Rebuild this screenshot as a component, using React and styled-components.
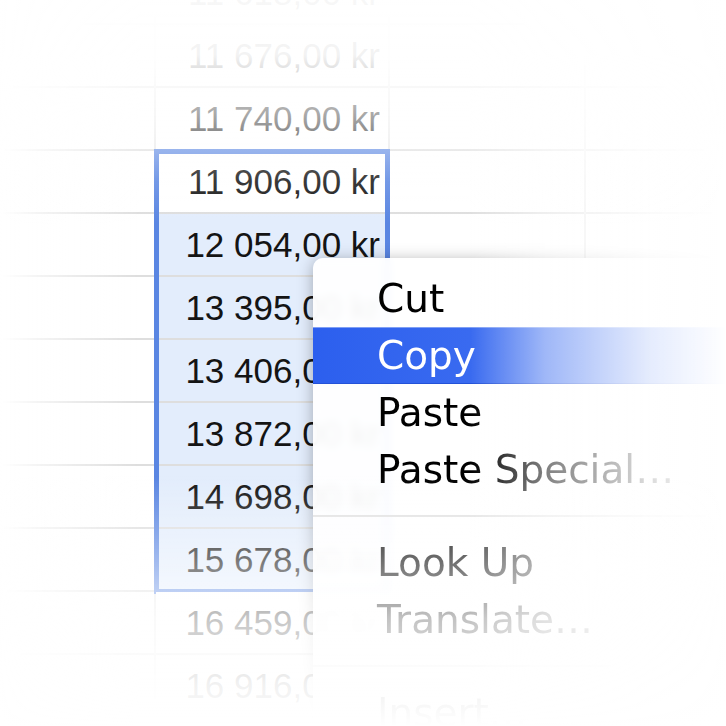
import React from 'react';
import styled, { createGlobalStyle } from 'styled-components';

const GlobalStyle = createGlobalStyle`
  html, body {
    margin: 0;
    padding: 0;
    background: #fff;
  }
`;

const ROW = 63;

const values = [
  '11 618,00 kr',
  '11 676,00 kr',
  '11 740,00 kr',
  '11 906,00 kr',
  '12 054,00 kr',
  '13 395,00 kr',
  '13 406,00 kr',
  '13 872,00 kr',
  '14 698,00 kr',
  '15 678,00 kr',
  '16 459,00 kr',
  '16 916,00 kr',
  '17 204,00 kr',
];

const SEL_FROM = 3;
const SEL_TO = 9;

const menuItems = [
  { label: 'Cut' },
  { label: 'Copy', active: true },
  { label: 'Paste' },
  { label: 'Paste Special…' },
  { separator: true },
  { label: 'Look Up' },
  { label: 'Translate…' },
  { separator: true },
  { label: 'Insert…' },
];

const Page = styled.div`
  position: relative;
  width: 726px;
  height: 726px;
  overflow: hidden;
  background: #fff;
`;

const Sheet = styled.div`
  position: relative;
  z-index: 0;
  display: flex;
  margin-top: -38px;
`;

const Column = styled.div`
  flex: ${props => (props.$width ? 'none' : '1')};
  width: ${props => (props.$width ? `${props.$width}px` : 'auto')};
  box-sizing: border-box;
  border-right: ${props => (props.$line ? '2px solid #e8e8e8' : 'none')};
  display: flex;
  flex-direction: column;
`;

const Cell = styled.div`
  flex: none;
  height: ${ROW}px;
  box-sizing: border-box;
  border-bottom: 2px solid #dedede;
  padding-right: 8px;
  font-family: 'Liberation Sans', Arial, sans-serif;
  font-size: 35px;
  line-height: 61px;
  text-align: right;
  white-space: nowrap;
  overflow: hidden;
  color: #141414;
  background: ${props =>
    props.$tone === 'selected' ? '#e3edfc' : '#fff'};
`;

const Selection = styled.div`
  display: flex;
  flex-direction: column;
  outline: 5px solid #5a86e2;
  outline-offset: -3px;
`;

const Menu = styled.div`
  position: absolute;
  left: 313px;
  top: 258px;
  z-index: 2;
  width: 480px;
  height: 520px;
  padding-top: 12px;
  box-sizing: border-box;
  border-top-left-radius: 10px;
  background: rgba(255, 255, 255, 0.95);
  backdrop-filter: blur(4px);
  box-shadow: 0 2px 16px rgba(0, 0, 0, 0.3);
`;

const MenuItem = styled.div`
  height: 57px;
  padding-left: 64px;
  font-family: 'DejaVu Sans', 'Lucida Grande', sans-serif;
  font-size: 39px;
  line-height: 57px;
  white-space: nowrap;
  color: ${props => (props.$active ? '#fff' : '#000')};
  background: ${props =>
    props.$active
      ? 'linear-gradient(to right, #2c5fee 0%, #3a6bf0 35%, #5482f3 100%)'
      : 'transparent'};
  box-shadow: ${props =>
    props.$active ? 'inset 0 1px 0 #7f9ff4, inset 0 -1px 0 #2352d8' : 'none'};
`;

const Separator = styled.div`
  height: 36px;
  display: flex;
  align-items: center;

  &::before {
    content: '';
    flex: 1;
    height: 2px;
    background: #e2e2e2;
  }
`;

const Fade = styled.div`
  position: absolute;
  inset: 0;
  z-index: 5;
  pointer-events: none;
  background:
    linear-gradient(
      to bottom,
      rgba(255, 255, 255, 0.97) 0px,
      rgba(255, 255, 255, 0.95) 55px,
      rgba(255, 255, 255, 0.62) 117px,
      rgba(255, 255, 255, 0.16) 181px,
      rgba(255, 255, 255, 0) 225px
    ),
    linear-gradient(
      to top,
      #fff 0px,
      rgba(255, 255, 255, 0.94) 43px,
      rgba(255, 255, 255, 0.76) 108px,
      rgba(255, 255, 255, 0.4) 171px,
      rgba(255, 255, 255, 0) 250px
    ),
    linear-gradient(
      to right,
      rgba(255, 255, 255, 0) 470px,
      rgba(255, 255, 255, 0.5) 545px,
      rgba(255, 255, 255, 0.86) 650px,
      #fff 726px
    ),
    linear-gradient(
      to right,
      #fff 0px,
      rgba(255, 255, 255, 0.65) 40px,
      rgba(255, 255, 255, 0) 140px
    );
`;

const EmptyColumn = ({ width, line }) => (
  <Column $width={width} $line={line}>
    {values.map(v => (
      <Cell key={v} />
    ))}
  </Column>
);

const AmountColumn = () => {
  const before = values.slice(0, SEL_FROM);
  const selected = values.slice(SEL_FROM, SEL_TO + 1);
  const after = values.slice(SEL_TO + 1);

  return (
    <Column $width={234} $line>
      {before.map(v => (
        <Cell key={v}>{v}</Cell>
      ))}
      <Selection>
        {selected.map((v, i) => (
          <Cell key={v} $tone={i === 0 ? 'active' : 'selected'}>
            {v}
          </Cell>
        ))}
      </Selection>
      {after.map(v => (
        <Cell key={v}>{v}</Cell>
      ))}
    </Column>
  );
};

const ContextMenu = () => (
  <Menu>
    {menuItems.map((item, i) =>
      item.separator ? (
        <Separator key={`sep-${i}`} />
      ) : (
        <MenuItem key={item.label} $active={item.active}>
          {item.label}
        </MenuItem>
      ),
    )}
  </Menu>
);

const App = () => (
  <Page>
    <GlobalStyle />
    <Sheet>
      <EmptyColumn width={156} line />
      <AmountColumn />
      <EmptyColumn width={196} line />
      <EmptyColumn />
    </Sheet>
    <ContextMenu />
    <Fade />
  </Page>
);

export default App;
